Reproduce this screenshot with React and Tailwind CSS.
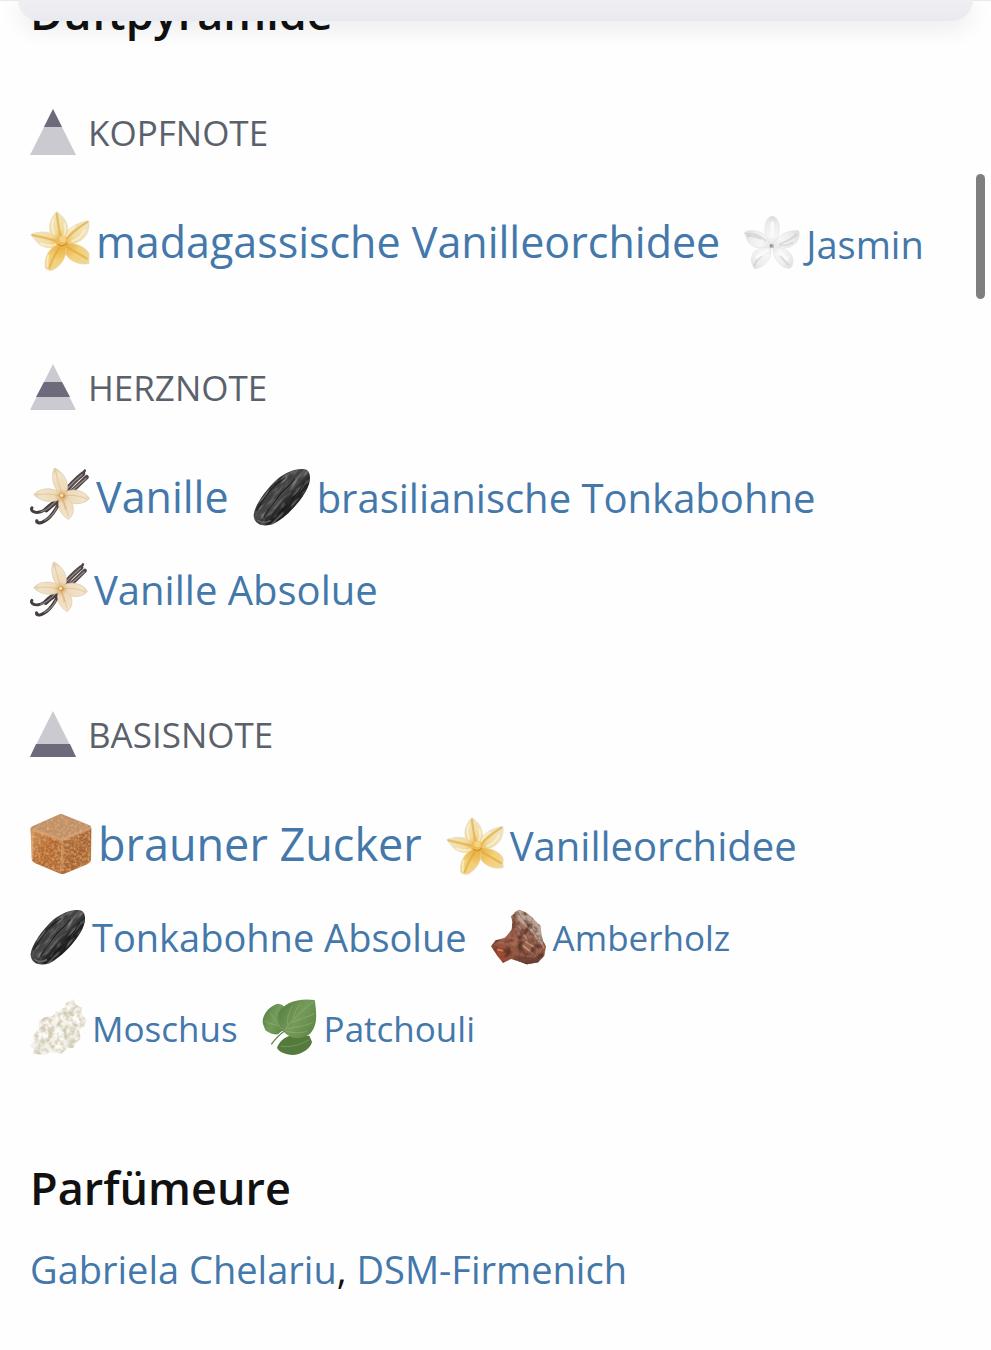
import React from 'react';

const pyramid = [
  {
    title: 'KOPFNOTE',
    level: 0,
    notes: [
      { name: 'madagassische Vanilleorchidee', icon: 'orchid', text: 'text-[43px]/[58px]', size: 'size-[60px]' },
      { name: 'Jasmin', icon: 'jasmine', text: 'text-[38px]/[54px]', size: 'size-[56px]' },
    ],
  },
  {
    title: 'HERZNOTE',
    level: 1,
    notes: [
      { name: 'Vanille', icon: 'vanilla', text: 'text-[43px]/[58px]', size: 'size-[60px]' },
      { name: 'brasilianische Tonkabohne', icon: 'tonka', text: 'text-[40px]/[56px]', size: 'size-[58px]' },
      { name: 'Vanille Absolue', icon: 'vanilla', text: 'text-[40px]/[56px]', size: 'size-[58px]' },
    ],
  },
  {
    title: 'BASISNOTE',
    level: 2,
    notes: [
      { name: 'brauner Zucker', icon: 'sugar', text: 'text-[45px]/[62px]', size: 'size-[62px]' },
      { name: 'Vanilleorchidee', icon: 'orchid', text: 'text-[40px]/[58px]', size: 'size-[58px]' },
      { name: 'Tonkabohne Absolue', icon: 'tonka', text: 'text-[38px]/[56px]', size: 'size-[56px]' },
      { name: 'Amberholz', icon: 'amberwood', text: 'text-[35px]/[54px]', size: 'size-[56px]' },
      { name: 'Moschus', icon: 'musk', text: 'text-[35px]/[52px]', size: 'size-[56px]' },
      { name: 'Patchouli', icon: 'patchouli', text: 'text-[35px]/[52px]', size: 'size-[56px]' },
    ],
  },
];

// Gradients and textures shared by all note icons
function IconDefs() {
  return (
    <svg className="absolute size-0" aria-hidden="true">
      <defs>
        <radialGradient id="orchidPetal" gradientUnits="userSpaceOnUse" cx="98" cy="95" r="98">
          <stop offset="0" stopColor="#e8b142" />
          <stop offset="0.4" stopColor="#f3dca0" />
          <stop offset="1" stopColor="#f0e4c4" />
        </radialGradient>
        <radialGradient id="orchidWarm" gradientUnits="userSpaceOnUse" cx="98" cy="95" r="98">
          <stop offset="0" stopColor="#e5a634" />
          <stop offset="0.6" stopColor="#f4cf78" />
          <stop offset="1" stopColor="#efd697" />
        </radialGradient>
        <radialGradient id="jasminePetal" gradientUnits="userSpaceOnUse" cx="84" cy="94" r="90">
          <stop offset="0" stopColor="#e4e4e6" />
          <stop offset="0.35" stopColor="#f6f6f7" />
          <stop offset="0.75" stopColor="#ededef" />
          <stop offset="1" stopColor="#dcdcdf" />
        </radialGradient>
        <radialGradient id="vanillaPetal" gradientUnits="userSpaceOnUse" cx="98" cy="92" r="92">
          <stop offset="0" stopColor="#d9a766" />
          <stop offset="0.25" stopColor="#efdaba" />
          <stop offset="0.75" stopColor="#f1e3ca" />
          <stop offset="1" stopColor="#dac59d" />
        </radialGradient>
        <linearGradient id="tonkaSkin" x1="0.25" y1="0.25" x2="0.75" y2="0.75">
          <stop offset="0" stopColor="#2b2a2b" />
          <stop offset="0.45" stopColor="#4a494a" />
          <stop offset="0.65" stopColor="#2a292a" />
          <stop offset="1" stopColor="#171617" />
        </linearGradient>
        <linearGradient id="sugarLeft" x1="0" y1="0" x2="1" y2="1">
          <stop offset="0" stopColor="#cf9259" />
          <stop offset="0.5" stopColor="#b4682f" />
          <stop offset="1" stopColor="#b3703a" />
        </linearGradient>
        <linearGradient id="sugarRight" x1="0" y1="0" x2="1" y2="1">
          <stop offset="0" stopColor="#b07445" />
          <stop offset="0.6" stopColor="#a7622f" />
          <stop offset="1" stopColor="#c08045" />
        </linearGradient>
        <linearGradient id="woodBark" x1="0.2" y1="1" x2="0.8" y2="0">
          <stop offset="0" stopColor="#8c4a34" />
          <stop offset="0.5" stopColor="#9b6552" />
          <stop offset="1" stopColor="#a98878" />
        </linearGradient>
        <linearGradient id="leafGreen" x1="0" y1="0.2" x2="1" y2="0.8">
          <stop offset="0" stopColor="#567f42" />
          <stop offset="0.5" stopColor="#759b5a" />
          <stop offset="1" stopColor="#5d8547" />
        </linearGradient>
        <filter id="sugarGrain" x="0" y="0" width="1" height="1" colorInterpolationFilters="sRGB">
          <feTurbulence type="fractalNoise" baseFrequency="0.12" numOctaves="3" seed="4" result="noise" />
          <feColorMatrix in="noise" type="matrix" values="0 0 0 0 0.87  0 0 0 0 0.68  0 0 0 0 0.48  0 2 0 0 -0.8" result="specks" />
          <feComposite in="specks" in2="SourceAlpha" operator="in" result="inner" />
          <feMerge>
            <feMergeNode in="SourceGraphic" />
            <feMergeNode in="inner" />
          </feMerge>
        </filter>
        <filter id="woodGrain" x="0" y="0" width="1" height="1" colorInterpolationFilters="sRGB">
          <feTurbulence type="fractalNoise" baseFrequency="0.05" numOctaves="3" seed="9" result="noise" />
          <feColorMatrix in="noise" type="matrix" values="0 0 0 0 0.35  0 0 0 0 0.2  0 0 0 0 0.15  0 2.4 0 0 -1" result="specks" />
          <feComposite in="specks" in2="SourceAlpha" operator="in" result="inner" />
          <feMerge>
            <feMergeNode in="SourceGraphic" />
            <feMergeNode in="inner" />
          </feMerge>
        </filter>
        <filter id="muskGrain" x="0" y="0" width="1" height="1" colorInterpolationFilters="sRGB">
          <feTurbulence type="fractalNoise" baseFrequency="0.06" numOctaves="3" seed="2" result="noise" />
          <feColorMatrix in="noise" type="matrix" values="0 0 0 0 0.82  0 0 0 0 0.79  0 0 0 0 0.7  0 3 0 0 -1.2" result="specks" />
          <feComposite in="specks" in2="SourceAlpha" operator="in" result="inner" />
          <feMerge>
            <feMergeNode in="SourceGraphic" />
            <feMergeNode in="inner" />
          </feMerge>
        </filter>
        <filter id="tonkaWrinkles" x="0" y="0" width="1" height="1" colorInterpolationFilters="sRGB">
          <feTurbulence type="fractalNoise" baseFrequency="0.025 0.11" numOctaves="2" seed="7" />
          <feColorMatrix type="matrix" values="0 0 0 0 0.6  0 0 0 0 0.6  0 0 0 0 0.6  0 3.5 0 0 -1.6" />
        </filter>
        <clipPath id="tonkaClip">
          <path d="M158 4C174 6 180 26 170 54C156 94 101 154 60 173C30 182 3 172 2 146C4 114 42 62 77 32C102 12 136-1 158 4Z" />
        </clipPath>
      </defs>
    </svg>
  );
}

function Orchid() {
  return (
    <>
      <g fill="url(#orchidPetal)" stroke="#e3d8bd" strokeWidth="2">
        <path d="M82 2C63 20 54 48 64 72L92 94L110 78C125 50 108 18 82 2Z" />
        <path d="M102 90C106 58 140 36 180 30C186 64 166 98 120 102Z" />
        <path d="M2 72C30 60 68 60 88 86L88 106C68 117 36 114 22 96Z" />
      </g>
      <g fill="url(#orchidWarm)" stroke="#ead9ac" strokeWidth="2">
        <path d="M100 100C124 92 168 106 181 130V161C148 168 112 152 98 112Z" />
        <path d="M86 102C58 114 42 142 47 175C54 182 66 185 74 179C98 164 115 138 110 108Z" />
      </g>
      <g fill="none" stroke="#dda832" strokeWidth="7" strokeLinecap="round" opacity="0.6">
        <path d="M82 8C86 34 88 58 95 84" />
        <path d="M176 34C148 50 124 72 106 90" />
        <path d="M8 74C36 80 62 86 88 94" />
        <path d="M174 146C150 132 126 118 106 106" />
        <path d="M60 174C66 150 80 128 94 108" />
      </g>
      <g fill="none" stroke="#fff9e6" strokeWidth="6" strokeLinecap="round" opacity="0.6">
        <path d="M72 26C66 42 68 56 74 70M106 40C110 54 108 66 104 74" />
        <path d="M138 48C124 58 116 68 112 78M168 58C160 74 146 88 130 92" />
        <path d="M34 100C48 107 64 107 78 103M56 138C52 150 52 160 54 170" />
      </g>
      <circle cx="98" cy="94" r="19" fill="#edbc59" />
      <circle cx="100" cy="86" r="10" fill="#f6d384" />
      <path d="M86 102C94 110 106 108 114 98" fill="none" stroke="#d89424" strokeWidth="5" />
    </>
  );
}

function Jasmine() {
  return (
    <>
      <g fill="url(#jasminePetal)" stroke="#e2e2e5" strokeWidth="2">
        <path d="M86 3C62 8 58 48 70 76L84 92L98 76C114 46 108 8 86 3Z" />
        <path d="M1 54C12 44 46 44 66 64L82 92C60 104 22 104 10 76Z" />
        <path d="M166 48C172 66 160 90 138 98C118 104 98 98 88 92C98 64 130 44 166 48Z" />
        <path d="M80 98C88 122 72 154 34 164C22 156 18 130 30 112C44 100 64 96 80 98Z" />
        <path d="M88 98C108 96 138 106 146 126C152 144 146 160 138 162C114 162 88 136 88 98Z" />
      </g>
      <g fill="none" stroke="#b9b9bd" strokeWidth="6" strokeLinecap="round" opacity="0.4">
        <path d="M8 58C26 54 48 62 66 78M12 64C28 62 40 66 50 72" />
        <path d="M158 60C146 74 130 80 110 88M148 84C138 90 122 94 108 92" />
        <path d="M32 154C34 144 42 134 52 126M134 150C126 144 118 134 112 126" />
      </g>
      <g fill="none" stroke="#fafafb" strokeWidth="10" strokeLinecap="round">
        <path d="M86 24V66M40 128C50 118 62 112 72 108M106 112C114 118 122 124 130 132" />
      </g>
      <circle cx="84" cy="94" r="7" fill="#b5b4ac" />
      <circle cx="82" cy="93" r="3" fill="#85847b" />
    </>
  );
}

function Vanilla() {
  return (
    <>
      <g fill="none" strokeLinecap="round">
        <path d="M104 84C122 60 144 38 162 24" stroke="#514647" strokeWidth="15" />
        <path d="M162 24L168 14" stroke="#514647" strokeWidth="8" />
        <path d="M116 86C138 72 156 50 174 34" stroke="#514647" strokeWidth="13" />
        <path d="M94 100C70 106 56 138 26 142C12 144 0 136 6 128" stroke="#453d3e" strokeWidth="9" />
        <path d="M88 108C72 112 60 124 50 134" stroke="#453d3e" strokeWidth="16" />
        <path d="M94 110C80 124 72 156 42 170C32 178 20 174 21 168" stroke="#453d3e" strokeWidth="10" />
        <path d="M118 66C134 48 148 36 160 26M128 76C146 62 160 48 172 38" stroke="#978c8b" strokeWidth="4" />
        <path d="M80 108C64 122 54 136 34 140M82 128C74 144 66 156 46 166" stroke="#8a807e" strokeWidth="4" />
      </g>
      <g fill="url(#vanillaPetal)" stroke="#dcc8a5" strokeWidth="2">
        <path d="M75 6C96 14 120 44 115 72L98 92C76 78 60 34 75 6Z" />
        <path d="M12 88C28 66 76 62 98 88L96 100C70 116 32 110 12 88Z" />
        <path d="M182 100C164 122 122 120 96 100L102 82C126 66 168 72 182 100Z" />
        <path d="M118 164C88 146 82 118 92 96L112 98C138 112 140 146 118 164Z" />
      </g>
      <g fill="none" stroke="#cfa870" strokeWidth="3" opacity="0.45">
        <path d="M78 14C84 42 90 64 98 84M20 88C46 84 68 86 92 92M172 100C148 90 126 88 106 92M118 154C112 134 106 114 100 100" />
      </g>
      <path d="M88 90C92 80 106 82 110 92C106 102 94 104 88 90Z" fill="#d59c4f" />
      <circle cx="97" cy="90" r="5" fill="#f8e2ad" />
      <path d="M98 100C104 112 108 120 110 134" stroke="#dfa878" strokeWidth="6" fill="none" opacity="0.5" />
    </>
  );
}

function Tonka() {
  return (
    <>
      <path
        d="M158 4C174 6 180 26 170 54C156 94 101 154 60 173C30 182 3 172 2 146C4 114 42 62 77 32C102 12 136-1 158 4Z"
        fill="url(#tonkaSkin)"
      />
      <g clipPath="url(#tonkaClip)">
        <g opacity="0.6">
          <rect x="-30" y="40" width="240" height="100" transform="rotate(-48 89 89)" filter="url(#tonkaWrinkles)" />
        </g>
        <g fill="none" stroke="#131213" strokeWidth="4" strokeLinecap="round" opacity="0.7">
          <path d="M12 130C24 104 40 88 52 70S84 44 98 30" />
          <path d="M34 150C44 126 64 112 76 90S104 66 128 34" />
          <path d="M62 160C76 146 92 128 110 106S140 78 158 44" />
        </g>
        <path d="M14 160C24 169 40 168 54 161" stroke="#737273" strokeWidth="4" fill="none" />
        <path d="M174 20C178 50 140 120 64 176L84 178L178 90Z" fill="#111" opacity="0.45" />
      </g>
    </>
  );
}

function Sugar() {
  return (
    <>
      <g strokeLinejoin="round" filter="url(#sugarGrain)">
        <path d="M4 42Q0 40 2 56L6 142Q8 146 16 150L92 182L98 72Z" fill="url(#sugarLeft)" />
        <path d="M98 72L186 42L185 142Q184 148 172 154L104 182Q98 184 92 182Z" fill="url(#sugarRight)" />
        <path d="M4 40L86 3Q94-1 104 4L182 36Q188 40 180 46L108 76Q98 80 88 76L6 46Z" fill="#c09068" />
      </g>
      <path d="M98 84V174" stroke="#dba56b" strokeWidth="8" opacity="0.5" />
      <path d="M8 48L94 80L182 46" stroke="#dfb184" strokeWidth="8" fill="none" opacity="0.55" />
      <path d="M7 60V138" stroke="#e6b784" strokeWidth="6" opacity="0.6" />
    </>
  );
}

function Amberwood() {
  return (
    <g filter="url(#woodGrain)">
      <path
        d="M84 2L104 10L122 24L136 42L148 48L150 84L165 112L160 140L142 160L108 166L80 156L60 150L36 162L20 142L0 112L14 94L42 86L62 62L64 38L60 22Z"
        fill="url(#woodBark)"
      />
      <path d="M70 10C80 44 112 52 128 76C140 104 158 106 160 126L148 50L122 24L84 2Z" fill="#bba596" />
      <path d="M66 62C82 74 88 96 80 116L40 104L14 102L44 86Z" fill="#a86650" />
      <path d="M6 112L48 116L56 138L36 158L20 140Z" fill="#a04a30" />
      <path d="M84 142L130 146L152 136L142 160L108 166L80 156Z" fill="#704437" />
      <g fill="none" stroke="#6b4336" strokeWidth="3" opacity="0.5">
        <path d="M82 10C92 34 116 44 130 68S148 104 156 126M72 34C76 62 104 68 118 100S128 128 144 150" />
        <path d="M68 62C84 84 92 92 92 120L80 152M14 96C44 92 62 110 88 132" />
      </g>
      <path d="M74 40C86 62 100 72 106 90M18 122L40 126M96 110L126 134M104 98L132 116" fill="none" stroke="#d0a892" strokeWidth="5" opacity="0.7" />
    </g>
  );
}

function Musk() {
  return (
    <g filter="url(#muskGrain)">
      <path
        d="M130 0L136 16L142 24L154 24L156 44L168 62L164 82L148 92L152 120L138 132L132 146L112 148L94 164L60 160L42 168L8 164L12 150L0 142L10 126L8 112L18 98L28 88L26 66L46 54L68 50L80 38L88 38L96 28L106 24L108 12Z"
        fill="#f3f1ea"
      />
      <g fill="#fcfbf8">
        <path d="M110 18L126 10L130 34L116 44L104 34Z" />
        <path d="M34 70L56 58L68 72L54 90L34 88Z" />
        <path d="M78 52L100 44L112 62L94 78L76 70Z" />
        <path d="M118 54L146 42L156 62L138 82L118 74Z" />
        <path d="M26 102L52 96L64 118L42 132L20 124Z" />
        <path d="M76 90L104 84L118 106L98 124L76 114Z" />
        <path d="M66 130L92 134L90 154L68 154Z" />
      </g>
      <g fill="#ddd8ca">
        <path d="M110 44L118 52L112 62L100 46Z" />
        <path d="M56 90L72 80L74 96L64 104Z" />
        <path d="M118 82L138 86L132 102L120 98Z" />
        <path d="M130 0L136 16L150 24L136 28Z" />
      </g>
    </g>
  );
}

function Patchouli() {
  return (
    <>
      <path d="M62 18L48 14C24 20 2 44 2 68C2 78 8 84 10 94C22 104 40 108 50 106L66 92L70 30Z" fill="url(#leafGreen)" />
      <path d="M45 146C50 130 68 112 86 110L142 110L150 128C146 148 122 164 94 168C68 166 50 158 45 146Z" fill="#547a3c" />
      <path d="M50 42C64 12 108-4 158 3C164 38 168 80 144 104C124 122 84 122 66 98C52 84 46 60 50 42Z" fill="url(#leafGreen)" />
      <path d="M62 102C48 112 40 122 30 134" fill="none" stroke="#fefefe" strokeWidth="12" />
      <path d="M68 96C50 108 38 122 28 136" fill="none" stroke="#66804f" strokeWidth="4" />
      <g fill="none" stroke="#a5c389" strokeWidth="2" opacity="0.6">
        <path d="M66 96C88 64 120 34 154 8" />
        <path d="M78 80C74 60 80 40 92 20M96 60C94 44 104 26 118 12M72 90C98 84 130 82 154 70M88 70C108 62 134 56 156 44M70 96C92 102 116 104 136 96" />
        <path d="M60 92C44 72 30 50 26 40M50 80C36 78 18 72 8 66" />
        <path d="M56 142C90 146 118 136 142 122" />
      </g>
    </>
  );
}

const artwork = {
  orchid: { Drawing: Orchid, viewBox: '0 0 184 184' },
  jasmine: { Drawing: Jasmine, viewBox: '0 0 170 170' },
  vanilla: { Drawing: Vanilla, viewBox: '0 0 184 184' },
  tonka: { Drawing: Tonka, viewBox: '0 0 178 178' },
  sugar: { Drawing: Sugar, viewBox: '0 0 188 184' },
  amberwood: { Drawing: Amberwood, viewBox: '0 0 168 168' },
  musk: { Drawing: Musk, viewBox: '0 0 168 168' },
  patchouli: { Drawing: Patchouli, viewBox: '0 0 168 168' },
};

function PyramidIcon({ level }) {
  return (
    <svg viewBox="0 0 46 46" className="size-[46px] shrink-0" aria-hidden="true">
      <path d="M23 0L46 46H0Z" fill="#cbcad1" />
      {level === 0 && <path d="M23 0L32 18H14Z" fill="#6c6a7b" />}
      {level === 1 && <path d="M14 18H32L40 33H6Z" fill="#6c6a7b" />}
      {level === 2 && <path d="M6 33H40L46 46H0Z" fill="#6c6a7b" />}
    </svg>
  );
}

function Note({ name, icon, text, size }) {
  const { Drawing, viewBox } = artwork[icon];
  return (
    <a href="#" className="flex items-end gap-1.5 text-[#4478ab]">
      <svg viewBox={viewBox} className={`${size} shrink-0`} aria-hidden="true">
        <Drawing />
      </svg>
      <span className={`${text} whitespace-nowrap`}>{name}</span>
    </a>
  );
}

function NoteSection({ title, level, notes }) {
  return (
    <section className="mb-[93px]">
      <h3 className="mb-14 flex items-end gap-3 text-[35px]/[44px] text-[#5a616b]">
        <PyramidIcon level={level} />
        {title}
      </h3>
      <div className="flex flex-wrap items-end gap-x-6 gap-y-[34px]">
        {notes.map((note) => (
          <Note key={note.name} {...note} />
        ))}
      </div>
    </section>
  );
}

export default function App() {
  return (
    <div className="relative min-h-screen overflow-hidden bg-[#fefefe] font-['Open_Sans',sans-serif] text-[#111]">
      <IconDefs />
      <div className="absolute inset-x-0 top-0 h-px bg-[#e9e9ee]" />
      <div className="absolute inset-x-[18px] top-0 z-10 h-[21px] rounded-b-3xl bg-linear-to-b from-[#efeff3] to-[#e9eaef] shadow-[0_6px_24px_rgba(0,0,0,0.09)]" />
      <div className="absolute top-[174px] right-[6px] h-[125px] w-[9px] rounded-full bg-[#7f7f7f]" />

      <main className="px-[30px] pb-10">
        <h2 className="mb-[61px] h-12 text-[45px]/[26px] font-semibold">Duftpyramide</h2>
        {pyramid.map((section) => (
          <NoteSection key={section.title} {...section} />
        ))}
        <h2 className="text-[45px]/[80px] font-semibold">Parfümeure</h2>
        <p className="mt-3 text-[38px]/[58px]">
          <a href="#" className="text-[#4478ab]">Gabriela Chelariu</a>,{' '}
          <a href="#" className="text-[#4478ab]">DSM-Firmenich</a>
        </p>
      </main>
    </div>
  );
}
